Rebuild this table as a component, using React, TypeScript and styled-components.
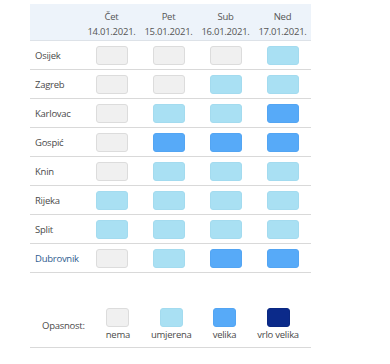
import { createGlobalStyle, styled } from 'styled-components';

type Level = 0 | 1 | 2 | 3;

const GlobalStyle = createGlobalStyle`
  body {
    margin: 0;
    background: #ffffff;
    font-family: 'Open Sans', 'Noto Sans', sans-serif;
  }
`;

const levelColors: Record<Level, { bg: string; border: string }> = {
  0: { bg: '#f0f0f0', border: '#dcdcdc' },
  1: { bg: '#a9e0f3', border: '#a3dbef' },
  2: { bg: '#57aaf8', border: '#53a5f3' },
  3: { bg: '#0b2a8a', border: '#0a2882' },
};

const Page = styled.div`
  padding: 4px 0 0 30px;
`;

const Table = styled.div`
  width: 281px;
  font-size: 9.5px;
  letter-spacing: -0.25px;
`;

const HeaderRow = styled.div`
  display: grid;
  grid-template-columns: 53px repeat(4, 57px);
  height: 37px;
  box-sizing: border-box;
  padding: 5px 0 2px;
  background: #edf3fa;
  border-bottom: 1px solid #dde2e8;
`;

const DayHead = styled.div`
  text-align: center;
  line-height: 15px;
  color: #555;
  white-space: nowrap;
`;

const Row = styled.div`
  display: grid;
  grid-template-columns: 53px repeat(4, 57px);
  align-items: center;
  height: 29px;
  box-sizing: border-box;
  border-bottom: 1px solid #d9d9d9;
`;

const City = styled.div<{ $active?: boolean }>`
  padding-left: 5px;
  color: ${(p) => (p.$active ? '#2f5d8f' : '#4a4a4a')};
`;

const Cell = styled.div`
  display: flex;
  justify-content: center;
`;

const Box = styled.div<{ $level: Level; $w: number }>`
  width: ${(p) => p.$w}px;
  height: 19px;
  box-sizing: border-box;
  border-radius: 3px;
  background: ${(p) => levelColors[p.$level].bg};
  border: 1px solid ${(p) => levelColors[p.$level].border};
`;

const Legend = styled.div`
  display: flex;
  align-items: center;
  gap: 21px;
  padding: 35px 0 4px 12px;
  border-bottom: 1px solid #d9d9d9;
`;

const LegendTitle = styled.div`
  color: #4a4a4a;
`;

const LegendItem = styled.div`
  display: flex;
  flex-direction: column;
  align-items: center;
`;

const LegendLabel = styled.div`
  line-height: 16px;
  color: #4a4a4a;
  white-space: nowrap;
`;

const days = [
  { name: 'Čet', date: '14.01.2021.' },
  { name: 'Pet', date: '15.01.2021.' },
  { name: 'Sub', date: '16.01.2021.' },
  { name: 'Ned', date: '17.01.2021.' },
];

const cities: { name: string; levels: Level[]; active?: boolean }[] = [
  { name: 'Osijek', levels: [0, 0, 0, 1] },
  { name: 'Zagreb', levels: [0, 0, 1, 1] },
  { name: 'Karlovac', levels: [0, 1, 1, 2] },
  { name: 'Gospić', levels: [0, 2, 2, 2] },
  { name: 'Knin', levels: [0, 1, 1, 1] },
  { name: 'Rijeka', levels: [1, 1, 1, 1] },
  { name: 'Split', levels: [1, 1, 1, 1] },
  { name: 'Dubrovnik', levels: [0, 1, 2, 2], active: true },
];

const legend: { label: string; level: Level }[] = [
  { label: 'nema', level: 0 },
  { label: 'umjerena', level: 1 },
  { label: 'velika', level: 2 },
  { label: 'vrlo velika', level: 3 },
];

export default function App() {
  return (
    <Page>
      <GlobalStyle />
      <Table>
        <HeaderRow>
          <div />
          {days.map((d) => (
            <DayHead key={d.date}>
              {d.name}
              <br />
              {d.date}
            </DayHead>
          ))}
        </HeaderRow>
        {cities.map((c) => (
          <Row key={c.name}>
            <City $active={c.active}>{c.name}</City>
            {c.levels.map((lvl, i) => (
              <Cell key={i}>
                <Box $level={lvl} $w={32} />
              </Cell>
            ))}
          </Row>
        ))}
        <Legend>
          <LegendTitle>Opasnost:</LegendTitle>
          {legend.map((l) => (
            <LegendItem key={l.label}>
              <Box $level={l.level} $w={23} />
              <LegendLabel>{l.label}</LegendLabel>
            </LegendItem>
          ))}
        </Legend>
      </Table>
    </Page>
  );
}
